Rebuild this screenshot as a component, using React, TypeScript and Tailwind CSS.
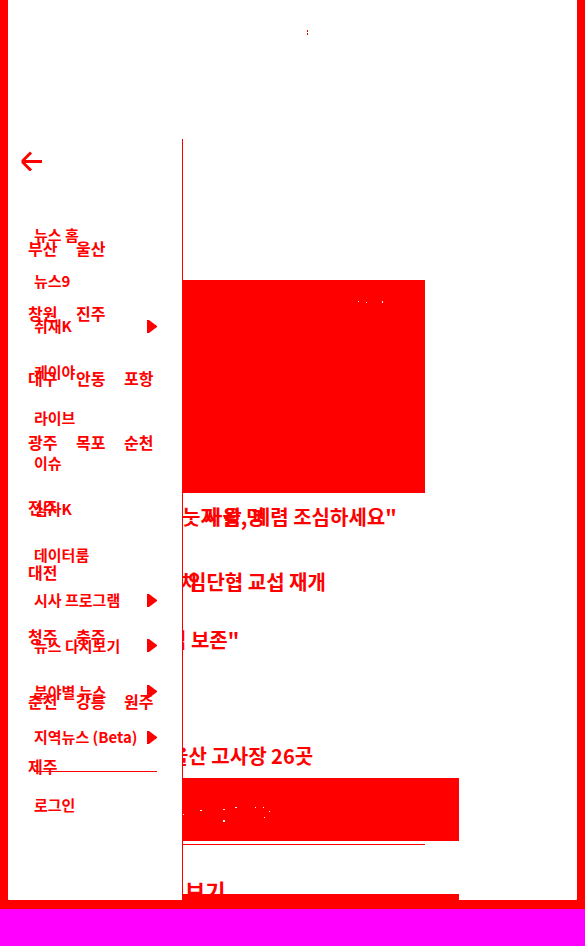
const menu = [
  { label: '뉴스 홈' },
  { label: '뉴스9' },
  { label: '취재K', sub: true },
  { label: '케이야' },
  { label: '라이브' },
  { label: '이슈' },
  { label: '심사K' },
  { label: '데이터룸' },
  { label: '시사 프로그램', sub: true },
  { label: '뉴스 다시보기', sub: true },
  { label: '분야별 뉴스', sub: true },
  { label: '지역뉴스 (Beta)', sub: true },
];

const regions = [
  ['부산', '울산'],
  ['창원', '진주'],
  ['대구', '안동', '포항'],
  ['광주', '목포', '순천'],
  ['전주'],
  ['대전'],
  ['청주', '충주'],
  ['춘천', '강릉', '원주'],
  ['제주'],
];

function Drawer() {
  return (
    <aside className="absolute left-0 top-[139px] bottom-0 w-[175px] border-r border-[#f00] bg-white">
      <button type="button" aria-label="닫기" className="ml-3 mt-2 flex h-7 w-7 items-center">
        <svg width="22" height="20" viewBox="0 0 22 20" className="ml-px" fill="none" stroke="#f00" strokeWidth="3">
          <path d="M21 10.500H2M10 1.500L2 9.500v2l8 8" />
        </svg>
      </button>
      <nav aria-label="지역" className="absolute left-5 top-[77px] flex h-[582px] flex-col text-[16px] leading-6">
        {regions.map((row) => (
          <ul key={row[0]} className="flex flex-1 items-center">
            {row.map((name) => (
              <li key={name} className="w-12">
                <a href="#region">{name}</a>
              </li>
            ))}
          </ul>
        ))}
      </nav>
      <nav aria-label="메뉴" className="relative ml-[26px] mr-[25px] mt-[37px] text-[15px] leading-6">
        <ul className="flex h-[548px] flex-col">
          {menu.map((item) => (
            <li key={item.label} className="flex flex-1 items-center justify-between whitespace-nowrap">
              <a href="#menu">{item.label}</a>
              {item.sub && (
                <svg width="10" height="13" viewBox="0 0 10 13" className="shrink-0" fill="#f00">
                  <path d="M0 0h2l8 6v1l-8 6H0z" />
                </svg>
              )}
            </li>
          ))}
        </ul>
        <div className="mt-[11px] border-t border-[#f00] pt-[21px]">
          <a href="#login">로그인</a>
        </div>
      </nav>
    </aside>
  );
}

export default function App() {
  return (
    <div className="min-h-screen bg-[#f0f] font-['Noto_Sans_CJK_KR',sans-serif] font-bold text-[#f00]">
      <div className="bg-[#f00] px-2 pb-[9px]">
        <div className="relative h-[900px] overflow-hidden rounded-b-[1px] bg-white">
          <header className="flex h-[280px] justify-center pt-[30px]">
            <svg width="1" height="5" viewBox="0 0 1 5" className="ml-[30px]" fill="#d00">
              <path d="M0 0h1v2H0zM0 3h1v2H0z" />
            </svg>
          </header>
          <main className="whitespace-nowrap text-[20px] leading-8">
            <div className="mr-[152px] h-[213px] bg-[#f00]">
              <svg width="417" height="213" fill="#fff">
                <path d="M350 21h1v1h-1zM358 22h1v1h-1zM374 21h1v2h-1z" />
              </svg>
            </div>
            <h2 className="mt-2 grid pl-[174px]">
              <a href="#news" className="col-start-1 row-start-1">눗자 왕 명</a>
              <a href="#news" className="col-start-1 row-start-1 pl-[22px]">사을, 폐렴 조심하세요"</a>
            </h2>
            <h2 className="mt-[33px] grid pl-[172px]">
              <a href="#news" className="col-start-1 row-start-1">차</a>
              <a href="#news" className="col-start-1 row-start-1 pl-2">임단협 교섭 재개</a>
            </h2>
            <h2 className="mt-[26px] pl-[160px]">
              <a href="#news">립 보존"</a>
            </h2>
            <h2 className="mt-[84px] pl-[162px]">
              <a href="#news">울산 고사장 26곳</a>
            </h2>
            <div className="mr-[118px] mt-[6px] h-[63px] bg-[#f00]">
              <svg width="451" height="63" fill="#fff">
                <path d="M175 36h1v1h-1zM192 32h2v1h-2zM215 31h2v1h-2zM215 42h2v2h-2zM227 29h2v1h-2zM247 29h1v1h-1zM255 29h1v1h-1zM261 33h1v1h-1zM256 39h1v1h-1z" />
              </svg>
            </div>
            <hr className="mr-[152px] mt-[3px] border-t border-[#f00]" />
            <section>
              <h3 className="mt-[30px] h-[19px] overflow-hidden pl-[177px] text-[22px] leading-[30px]">보기</h3>
              <div className="mr-[118px] h-[6px] bg-[#f00]" />
            </section>
          </main>
          <Drawer />
        </div>
      </div>
    </div>
  );
}
